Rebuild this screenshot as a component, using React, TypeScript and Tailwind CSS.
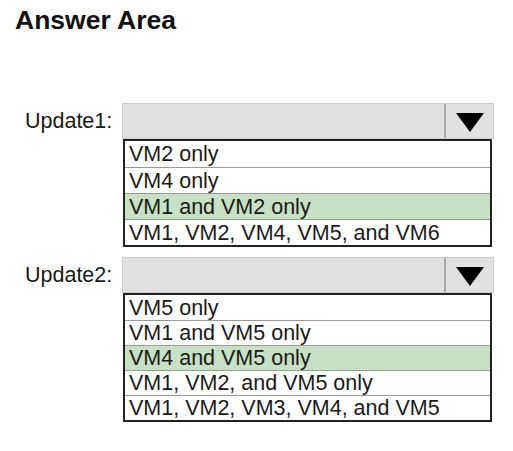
import React from 'react';

interface DropdownProps {
  label: string;
  options: string[];
  selected: number;
  rowClass: string;
}

function Caret() {
  return (
    <svg width="28" height="19" viewBox="0 0 28 19">
      <polygon points="0,0 28,0 14,19" fill="#000" />
    </svg>
  );
}

function Dropdown({ label, options, selected, rowClass }: DropdownProps) {
  return (
    <div className="flex items-start">
      {/* Label column */}
      <div className="w-[122px] h-[36px] pl-[25px] flex items-center text-[21.5px] leading-[24px] text-[#1a1a1a]">
        {label}
      </div>

      <div className="flex flex-col">
        {/* Closed select header */}
        <div className="w-[372px] h-[36px] flex bg-[#e1e1e1] border border-[#cbcbcb]">
          <div className="flex-1" />
          <div className="w-[49px] border-l-2 border-[#a8a8a8] flex items-center justify-center pt-[2px]">
            <Caret />
          </div>
        </div>

        {/* Options list */}
        <div className="w-[369px] ml-px border-2 border-[#222] bg-white">
          {options.map((opt, i) => (
            <div
              key={opt}
              className={`${rowClass} pl-[4px] flex items-center text-[21.5px] leading-[24px] text-[#1a1a1a] whitespace-nowrap ${
                i > 0 ? 'border-t border-[#9a9a9a]' : ''
              } ${i === selected ? 'bg-[#c6e1c3]' : ''}`}
            >
              {opt}
            </div>
          ))}
        </div>
      </div>
    </div>
  );
}

export default function App() {
  return (
    <div
      className="w-[513px] h-[451px] bg-white overflow-hidden"
      style={{ fontFamily: '"Liberation Sans", Arial, sans-serif' }}
    >
      <h1 className="pt-[7px] pl-[15px] text-[26.5px] leading-[26px] font-bold text-[#111]">Answer Area</h1>

      <div className="mt-[70px] flex flex-col gap-[10px]">
        <Dropdown
          label="Update1:"
          options={['VM2 only', 'VM4 only', 'VM1 and VM2 only', 'VM1, VM2, VM4, VM5, and VM6']}
          selected={2}
          rowClass="h-[26px]"
        />
        <Dropdown
          label="Update2:"
          options={[
            'VM5 only',
            'VM1 and VM5 only',
            'VM4 and VM5 only',
            'VM1, VM2, and VM5 only',
            'VM1, VM2, VM3, VM4, and VM5',
          ]}
          selected={2}
          rowClass="h-[25px]"
        />
      </div>
    </div>
  );
}
